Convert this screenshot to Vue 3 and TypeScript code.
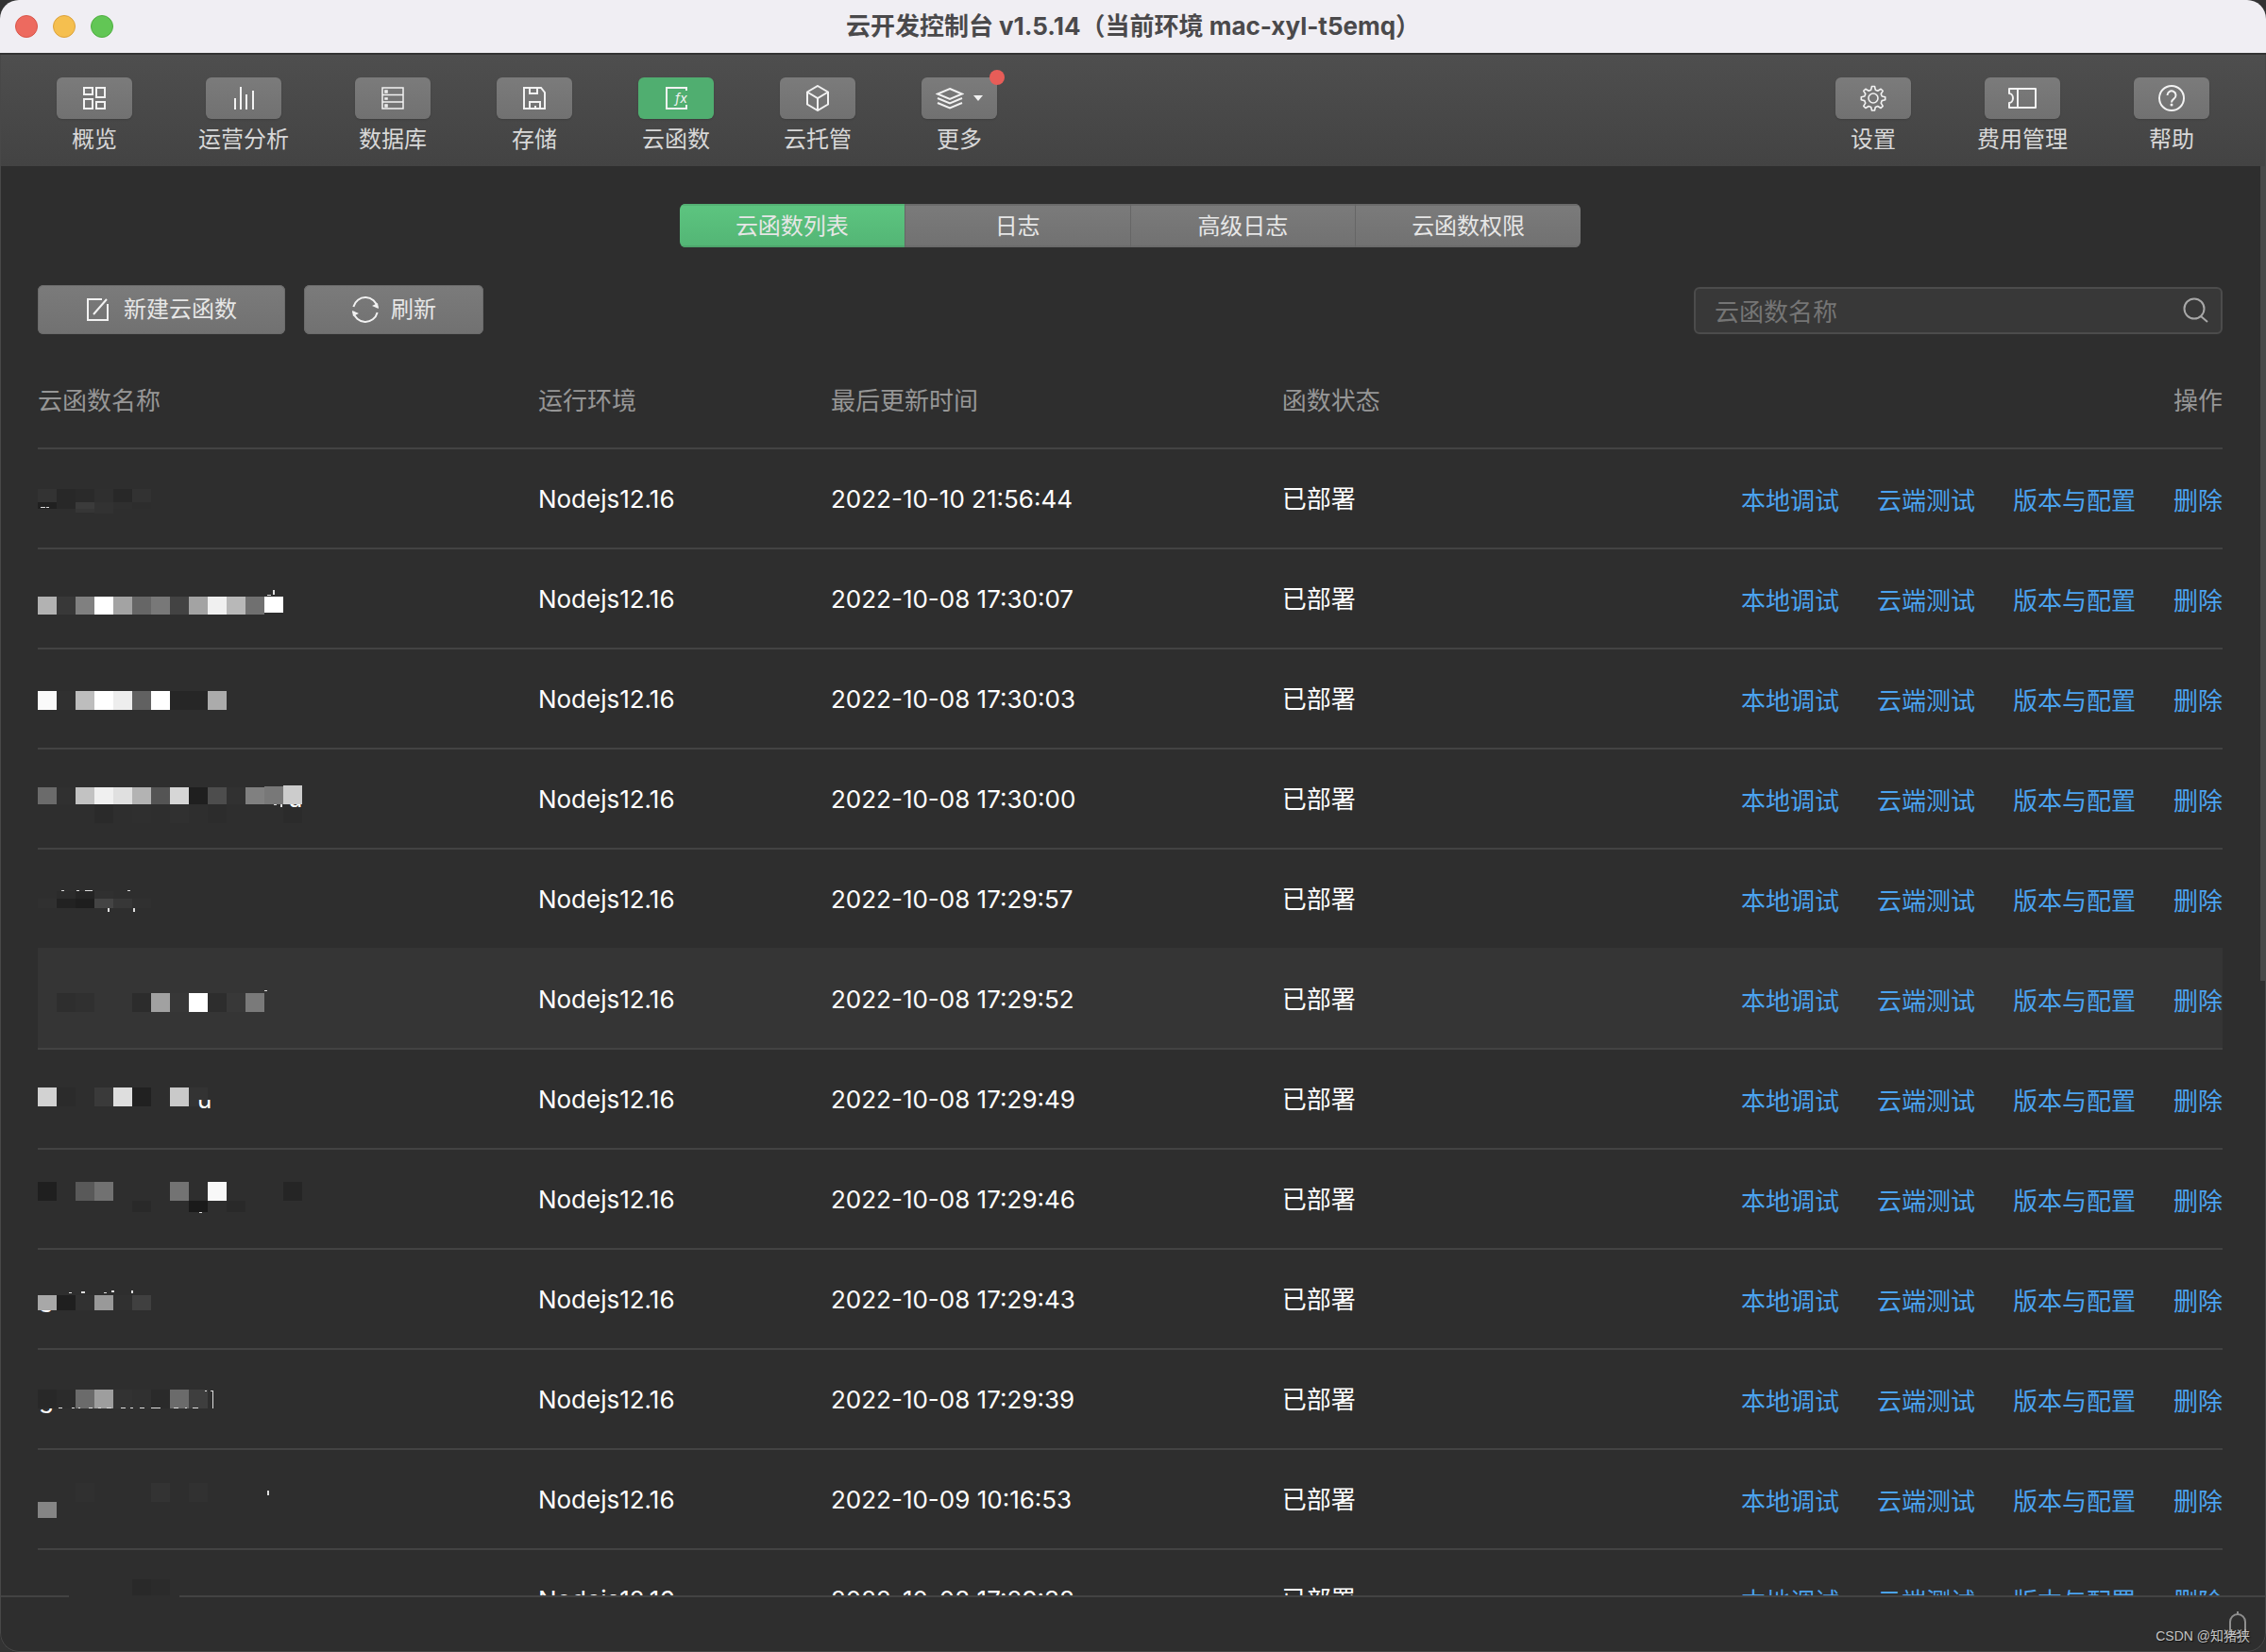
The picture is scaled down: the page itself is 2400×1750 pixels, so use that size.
<script setup lang="ts">
import { ref } from 'vue'

interface NavItem {
  key: string
  label: string
  dot?: boolean
}

/** Mosaic block: column, top, height, grey level (hex pair) */
type Block = [number, number, number, string]
/** Bright speck: x, y, width, height */
type Speck = [number, number, number, number]

interface Remnant {
  text: string
  x: number
  baseline: number
  clipTop: number
}

interface CloudFunction {
  id: number
  updated: string
  blocks: Block[]
  specks: Speck[]
  remnant?: Remnant
}

const leftNav: NavItem[] = [
  { key: 'overview', label: '概览' },
  { key: 'analysis', label: '运营分析' },
  { key: 'database', label: '数据库' },
  { key: 'storage', label: '存储' },
  { key: 'function', label: '云函数' },
  { key: 'hosting', label: '云托管' },
  { key: 'more', label: '更多', dot: true },
]
const rightNav: NavItem[] = [
  { key: 'settings', label: '设置' },
  { key: 'billing', label: '费用管理' },
  { key: 'help', label: '帮助' },
]
const groups = [
  { side: 'left', items: leftNav },
  { side: 'right', items: rightNav },
]
const tabs = ['云函数列表', '日志', '高级日志', '云函数权限']
const actions = ['本地调试', '云端测试', '版本与配置', '删除']

const activeNav = ref('function')
const activeTab = ref(0)
const keyword = ref('')
const hovered = ref(5)

function line(top: number, height: number, greys: string): Block[] {
  return greys
    .split(' ')
    .map((grey, col): Block => [col, top, height, grey])
    .filter((block) => block[3] !== '--')
}

const rows: CloudFunction[] = [
  {
    id: 0,
    updated: '2022-10-10 21:56:44',
    blocks: [...line(44, 14, '33 28 2a 2f 28 32'), ...line(58, 7, '20 28 3b 32 2f 2d'), [2, 65, 4, '36'], [3, 65, 5, '32']],
    specks: [[3, 63, 5, 1], [9, 63, 3, 1]],
  },
  {
    id: 1,
    updated: '2022-10-08 17:30:07',
    blocks: [...line(52, 19, 'b2 38 80 ff a3 66 78 43 a3 f0 b8 70 --'), [12, 52, 17, 'ff']],
    specks: [[249, 45, 2, 5], [243, 50, 4, 1]],
  },
  {
    id: 2,
    updated: '2022-10-08 17:30:03',
    blocks: line(46, 20, 'fa 30 bd ff ed 61 ff 26 26 ab'),
    specks: [],
  },
  {
    id: 3,
    updated: '2022-10-08 17:30:00',
    blocks: [
      ...line(42, 18, '6b 30 c2 f0 e0 b3 54 d6 1f 4d 31 80 78 cc'),
      [12, 41, 2, '78'],
      [13, 40, 2, 'cc'],
      ...line(60, 20, '-- -- -- 2a -- 2f -- 30 -- 2c -- -- -- 2b'),
    ],
    specks: [[250, 60, 3, 1], [257, 60, 2, 3]],
    remnant: { text: 'u', x: 265, baseline: 63, clipTop: 60 },
  },
  {
    id: 4,
    updated: '2022-10-08 17:29:57',
    blocks: [...line(46, 8, '-- 2b 24 30'), ...line(54, 10, '30 22 1e 44 37 30')],
    specks: [[25, 45, 3, 1], [41, 45, 3, 1], [50, 45, 8, 1], [95, 45, 3, 1], [74, 64, 2, 4], [101, 64, 2, 4]],
  },
  {
    id: 5,
    updated: '2022-10-08 17:29:52',
    blocks: line(48, 20, '-- 2e 30 -- -- 2c a1 37 ff 2d 38 7a'),
    specks: [[240, 45, 3, 1]],
  },
  {
    id: 6,
    updated: '2022-10-08 17:29:49',
    blocks: line(42, 20, 'd2 2b -- 3a de 21 -- c9 33'),
    specks: [],
    remnant: { text: 'u', x: 169, baseline: 64, clipTop: 55 },
  },
  {
    id: 7,
    updated: '2022-10-08 17:29:46',
    blocks: [
      ...line(36, 20, '1f -- 59 71 -- -- -- 73 -- f8 -- -- -- 25'),
      ...line(56, 12, '-- -- -- -- -- 29 -- -- 1a -- 29'),
    ],
    specks: [[171, 68, 3, 1]],
  },
  {
    id: 8,
    updated: '2022-10-08 17:29:43',
    blocks: line(50, 16, 'a8 1f 31 99 30 40'),
    specks: [[33, 47, 3, 1], [46, 46, 4, 2], [70, 47, 3, 1], [78, 45, 3, 2], [99, 45, 2, 3]],
    remnant: { text: 'g', x: 1, baseline: 62, clipTop: 66 },
  },
  {
    id: 9,
    updated: '2022-10-08 17:29:39',
    blocks: line(44, 20, '28 2b 6b 9e 32 30 2a 6b 3e'),
    specks: [
      [22, 63, 4, 1], [36, 63, 3, 1], [43, 63, 2, 1], [54, 63, 4, 1], [64, 63, 3, 1], [73, 63, 5, 1],
      [88, 63, 5, 1], [98, 63, 3, 1], [108, 63, 5, 1], [120, 63, 10, 1], [144, 63, 5, 1], [156, 63, 2, 1],
      [164, 63, 6, 1], [177, 45, 2, 1], [183, 45, 2, 1], [185, 45, 1, 19],
    ],
    remnant: { text: 'g', x: 1, baseline: 63, clipTop: 64 },
  },
  {
    id: 10,
    updated: '2022-10-09 10:16:53',
    blocks: [...line(37, 20, '-- -- 30 -- -- -- 33 -- 31'), [0, 57, 17, '85']],
    specks: [[243, 45, 2, 5]],
  },
  {
    id: 11,
    updated: '2022-10-08 17:29:38',
    blocks: line(33, 20, '-- -- -- -- -- 29 2b'),
    specks: [],
  },
]
</script>

<template>
  <div class="window">
    <header class="titlebar">
      <div class="lights">
        <button class="light close" type="button" aria-label="关闭"></button>
        <button class="light minimize" type="button" aria-label="最小化"></button>
        <button class="light maximize" type="button" aria-label="全屏"></button>
      </div>
      <h1>云开发控制台 v1.5.14（当前环境 mac-xyl-t5emq）</h1>
    </header>

    <nav class="toolbar">
      <div v-for="group in groups" :key="group.side" class="nav-group">
        <button
          v-for="item in group.items"
          :key="item.key"
          type="button"
          class="nav-item"
          :class="{ active: activeNav === item.key }"
          @click="activeNav = item.key"
        >
          <span class="nav-icon">
            <svg v-if="item.key === 'overview'" width="24" height="24" viewBox="0 0 24 24">
              <path d="M1 1h9v7H1zM14 1h9v10h-9zM1 13h9v10H1zM14 16h9v7h-9z" />
            </svg>
            <svg v-else-if="item.key === 'analysis'" width="24" height="24" viewBox="0 0 24 24">
              <path d="M3 12v12M9 0v24M15 8v16M22 4v20" />
            </svg>
            <svg v-else-if="item.key === 'database'" width="24" height="24" viewBox="0 0 24 24">
              <path d="M1 1h22v22H1zM1 8.500h22M1 16h22M4 4h2v2H4zM4 12h2v1H4zM4 19h2v2H4z" stroke-width="1.500" />
            </svg>
            <svg v-else-if="item.key === 'storage'" width="24" height="24" viewBox="0 0 24 24">
              <path d="M1 1h18l4 5v17H1zM7 1v6h8V1M7 23v-7h11v7M13 20v3" />
            </svg>
            <svg v-else-if="item.key === 'function'" width="24" height="24" viewBox="0 0 24 24">
              <path d="M23 4V1H2v22h21v-4" />
              <text x="11" y="17" class="fx">fx</text>
            </svg>
            <svg v-else-if="item.key === 'hosting'" width="26" height="28" viewBox="0 0 26 28">
              <path d="M13 1l11 6.500v13L13 27 2 20.500v-13zM2 7.500L13 14l11-6.500M13 14v13" />
            </svg>
            <template v-else-if="item.key === 'more'">
              <svg width="30" height="24" viewBox="0 0 30 24">
                <path d="M15 2l13 5.500L15 13 2 7.500zM2 12l13 5.500L28 12M2 17l13 5.500L28 17" />
              </svg>
              <svg class="caret" width="10" height="6" viewBox="0 0 10 6"><path d="M0 0h10L5 6z" /></svg>
            </template>
            <svg v-else-if="item.key === 'settings'" width="28" height="28" viewBox="0 0 28 28">
              <path
                d="M12.500 1.500h3l.8 3.700 2.500 1 3.300-2 2.100 2.100-2 3.200 1 2.500 3.500.8v3l-3.500.8-1 2.600 2 3.200-2.100 2.100-3.300-2-2.500 1-.8 3.500h-3l-.8-3.500-2.500-1-3.300 2-2.100-2.100 2-3.200-1-2.600-3.500-.8v-3l3.500-.8 1-2.500-2-3.200 2.100-2.100 3.300 2 2.500-1z"
                stroke-width="1.600"
                stroke-linejoin="round"
              />
              <circle cx="14" cy="14" r="5" stroke-width="1.600" />
            </svg>
            <svg v-else-if="item.key === 'billing'" width="30" height="24" viewBox="0 0 30 24">
              <path d="M1 2h28v20H1v-5c2 0 4-2 4-5s-2-5-4-5zM10 2v20" stroke-linejoin="round" />
            </svg>
            <svg v-else width="28" height="28" viewBox="0 0 28 28">
              <circle cx="14" cy="14" r="13" />
              <path d="M9.500 11a4.500 4.500 0 1 1 7 3.600c-1.800 1.200-2.500 2-2.500 3.900" />
              <circle cx="14" cy="21" r="1.500" class="solid" />
            </svg>
            <i v-if="item.dot" class="dot"></i>
          </span>
          <span class="nav-label">{{ item.label }}</span>
        </button>
      </div>
    </nav>

    <main class="content">
      <div class="tabs" role="tablist">
        <button
          v-for="(tab, index) in tabs"
          :key="tab"
          type="button"
          role="tab"
          class="tab"
          :class="{ selected: activeTab === index }"
          :aria-selected="activeTab === index"
          @click="activeTab = index"
        >
          {{ tab }}
        </button>
      </div>

      <div class="actions">
        <button type="button" class="action create">
          <svg width="24" height="26" viewBox="0 0 24 26">
            <path d="M17 2H2v22h21V7M22 2L8 18" />
          </svg>
          新建云函数
        </button>
        <button type="button" class="action refresh">
          <svg width="30" height="30" viewBox="0 0 30 30">
            <path d="M2.350 12A13 13 0 0 1 27.800 13M27.650 18A13 13 0 0 1 2.200 17" />
            <path d="M29 14l-7-3 6-3zM1 16l7 3-6 3z" class="solid" />
          </svg>
          刷新
        </button>
        <label class="search">
          <input v-model="keyword" type="text" placeholder="云函数名称" aria-label="云函数名称" />
          <svg width="28" height="28" viewBox="0 0 28 28">
            <circle cx="12" cy="12" r="10.500" />
            <path d="M19 20l7 6" />
          </svg>
        </label>
      </div>

      <table>
        <colgroup>
          <col class="col-name" />
          <col class="col-runtime" />
          <col class="col-updated" />
          <col />
        </colgroup>
        <thead>
          <tr>
            <th scope="col">云函数名称</th>
            <th scope="col">运行环境</th>
            <th scope="col">最后更新时间</th>
            <th scope="col"><span class="split"><span>函数状态</span><span>操作</span></span></th>
          </tr>
        </thead>
        <tbody>
          <tr v-for="row in rows" :key="row.id" :class="{ hovered: hovered === row.id }">
            <td>
              <svg class="mosaic" width="300" height="104" viewBox="0 2 300 104" aria-hidden="true">
                <rect
                  v-for="(b, i) in row.blocks"
                  :key="'b' + i"
                  :x="b[0] * 20"
                  :y="b[1]"
                  width="20"
                  :height="b[2]"
                  :fill="'#' + b[3] + b[3] + b[3]"
                />
                <rect
                  v-for="(s, i) in row.specks"
                  :key="'s' + i"
                  :x="s[0]"
                  :y="s[1]"
                  :width="s[2]"
                  :height="s[3]"
                  fill="#dddddd"
                />
                <template v-if="row.remnant">
                  <clipPath :id="'remnant-' + row.id">
                    <rect x="0" :y="row.remnant.clipTop" width="300" height="20" />
                  </clipPath>
                  <text
                    :x="row.remnant.x"
                    :y="row.remnant.baseline"
                    :clip-path="'url(#remnant-' + row.id + ')'"
                  >{{ row.remnant.text }}</text>
                </template>
              </svg>
            </td>
            <td class="text">Nodejs12.16</td>
            <td class="text">{{ row.updated }}</td>
            <td class="text">
              <span class="split">
                <span>已部署</span>
                <span class="links"><a v-for="name in actions" :key="name" href="#">{{ name }}</a></span>
              </span>
            </td>
          </tr>
        </tbody>
      </table>
      <div class="scroll-thumb"></div>
    </main>

    <footer class="statusbar">
      <button type="button" class="bell" aria-label="通知">
        <svg width="24" height="30" viewBox="0 0 24 30">
          <path d="M4 23V12a8 8 0 0 1 16 0v11M1 24h22M9 28h6M12 1v3" />
        </svg>
      </button>
      <span class="watermark">CSDN @知猪狭</span>
    </footer>
  </div>
</template>

<style>
body {
  margin: 0;
  background: #333333;
}
</style>

<style scoped>
.window {
  position: relative;
  display: flex;
  flex-direction: column;
  height: 100vh;
  overflow: hidden;
  border-radius: 20px;
  background: #2e2e2e;
  color: #ffffff;
  font-family: Inter, 'Noto Sans CJK SC', sans-serif;
  font-size: 26px;
  line-height: 36px;
}
.window::after {
  content: '';
  position: absolute;
  inset: 0;
  border: 1px solid #484848;
  border-top: 0;
  border-radius: 20px;
  clip-path: inset(58px 0 0 0);
  pointer-events: none;
}
button {
  border: 0;
  padding: 0;
  background: none;
  color: inherit;
  font: inherit;
}
svg {
  display: block;
  flex: none;
  fill: none;
  stroke: #f2f2f2;
  stroke-width: 2;
}
.solid {
  fill: #f2f2f2;
  stroke: none;
}

.titlebar {
  position: relative;
  display: flex;
  flex: none;
  align-items: center;
  justify-content: center;
  height: 58px;
  box-sizing: border-box;
  border-bottom: 2px solid #333333;
  background: #f0eef3;
}
h1 {
  margin: 0;
  color: #4a494b;
  font-size: 26px;
  font-weight: 700;
  line-height: 36px;
}
.lights {
  position: absolute;
  left: 16px;
  display: flex;
  gap: 16px;
}
.light {
  width: 24px;
  height: 24px;
  border-radius: 50%;
}
.close {
  border: 1px solid #d8554a;
  background: #ed6a5f;
}
.minimize {
  border: 1px solid #dba13b;
  background: #f5bf4f;
}
.maximize {
  border: 1px solid #4fae40;
  background: #62c655;
}

.toolbar {
  display: flex;
  flex: none;
  justify-content: space-between;
  height: 118px;
  padding: 24px 60px 0;
  box-sizing: border-box;
  background: linear-gradient(#4e4e4e, #434343);
}
.nav-group {
  display: flex;
  gap: 70px;
}
.nav-item {
  display: flex;
  flex-direction: column;
  align-items: center;
  gap: 4px;
  min-width: 80px;
}
.nav-icon {
  position: relative;
  display: flex;
  align-items: center;
  justify-content: center;
  gap: 10px;
  width: 80px;
  height: 44px;
  border-radius: 6px;
  background: linear-gradient(#7b7b7b, #717171);
  box-shadow: 0 1px 2px rgba(0, 0, 0, 0.15);
}
.active .nav-icon {
  background: #50ae70;
}
.nav-label {
  color: #d8d8d8;
  font-size: 24px;
  line-height: 36px;
}
.fx {
  fill: #f2f2f2;
  stroke: none;
  font-size: 14px;
  font-style: italic;
}
.caret {
  fill: #f2f2f2;
  stroke: none;
}
.dot {
  position: absolute;
  top: -8px;
  right: -8px;
  width: 16px;
  height: 16px;
  border-radius: 50%;
  background: #e75d58;
}

.content {
  position: relative;
  flex: 1;
  min-height: 0;
  overflow: hidden;
  padding: 40px 46px 0 40px;
}
.tabs {
  display: flex;
  width: 954px;
  height: 46px;
  margin: 0 auto;
  overflow: hidden;
  border-radius: 6px;
}
.tab {
  flex: 1;
  padding-top: 2px;
  background: linear-gradient(#7b7b7b, #717171);
  box-shadow: inset 0 2px 0 #6b6b6b, inset 0 -2px 0 #6b6b6b;
  color: #e6e6e6;
  font-size: 24px;
}
.tab + .tab {
  border-left: 1px solid #666666;
}
.tab.selected {
  background: linear-gradient(#5dc580, #53b575);
  box-shadow: inset 0 2px 0 #54b274, inset 0 -2px 0 #4da56b;
}
.actions {
  display: flex;
  align-items: flex-end;
  gap: 20px;
  margin-top: 40px;
}
.action {
  display: flex;
  align-items: center;
  justify-content: center;
  height: 52px;
  border-radius: 6px;
  background: linear-gradient(#7b7b7b, #717171);
  box-shadow: inset 0 0 0 1px #6b6b6b;
  color: #e6e6e6;
  font-size: 24px;
}
.create {
  gap: 16px;
  width: 262px;
}
.refresh {
  gap: 12px;
  width: 190px;
}
.search {
  display: flex;
  align-items: center;
  width: 560px;
  height: 50px;
  margin-left: auto;
  padding: 0 12px 0 20px;
  box-sizing: border-box;
  border: 2px solid #4c4c4c;
  border-radius: 6px;
  background: #383838;
}
.search input {
  flex: 1;
  min-width: 0;
  height: 40px;
  padding: 2px 0 0;
  box-sizing: border-box;
  border: 0;
  outline: 0;
  background: none;
  color: #ffffff;
  font: inherit;
}
.search input::placeholder {
  color: #757575;
}
.search svg {
  stroke: #a8a8a8;
}

table {
  width: 100%;
  margin-top: 22px;
  border-spacing: 0;
  table-layout: fixed;
}
.col-name {
  width: 22.9%;
}
.col-runtime {
  width: 13.4%;
}
.col-updated {
  width: 20.65%;
}
th {
  height: 98px;
  padding: 0;
  color: #969696;
  font-weight: 400;
  text-align: left;
}
td {
  height: 106px;
  padding: 0;
  box-sizing: border-box;
  border-top: 2px solid #434343;
}
.text {
  padding-top: 2px;
}
.hovered td {
  border-top-color: #353535;
  background: #353535;
}
.split {
  display: flex;
  align-items: center;
  justify-content: space-between;
}
.links {
  display: flex;
  gap: 40px;
  padding-top: 4px;
}
a {
  color: #4ba3f0;
  text-decoration: none;
}
.mosaic {
  stroke: none;
}
.mosaic text {
  fill: #ffffff;
}
.scroll-thumb {
  position: absolute;
  top: 0;
  right: 0;
  width: 6px;
  height: 57%;
  background: #484848;
}

.statusbar {
  position: relative;
  display: flex;
  flex: none;
  align-items: flex-start;
  justify-content: flex-end;
  height: 60px;
  padding: 14px 18px 0 0;
  box-sizing: border-box;
  border-top: 2px solid #434343;
}
.statusbar::before {
  content: '';
  position: absolute;
  top: -2px;
  left: 73px;
  width: 117px;
  height: 2px;
  background: #2e2e2e;
}
.bell svg {
  stroke: #8e8e8e;
}
.watermark {
  position: absolute;
  right: 17px;
  bottom: 7px;
  color: #c4c4c4;
  font-family: 'Liberation Sans', 'Noto Sans CJK SC', sans-serif;
  font-size: 14px;
  line-height: 20px;
  text-shadow: 1px 1px 1px #111111;
}
</style>
